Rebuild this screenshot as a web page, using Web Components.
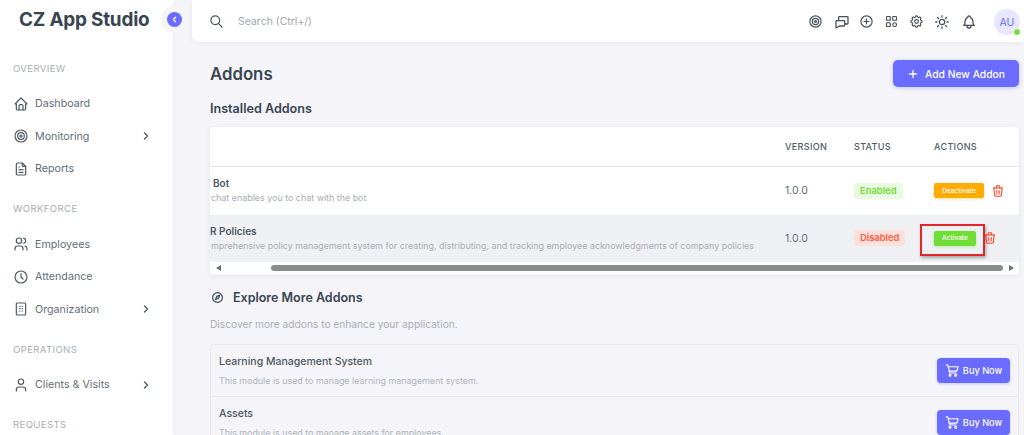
<!DOCTYPE html>
<html><head><meta charset="utf-8"><title>Addons</title>
<style>
html,body{margin:0;height:435px;overflow:hidden;background:#f4f4f9;font-family:"Inter","Liberation Sans",sans-serif;color:#646e78}
</style></head>
<body>
<app-shell>
  <side-nav slot="side">
    <nav-section label="OVERVIEW">
      <nav-item icon="home">Dashboard</nav-item>
      <nav-item icon="target" more>Monitoring</nav-item>
      <nav-item icon="file">Reports</nav-item>
    </nav-section>
    <nav-section label="WORKFORCE">
      <nav-item icon="users">Employees</nav-item>
      <nav-item icon="clock">Attendance</nav-item>
      <nav-item icon="building" more>Organization</nav-item>
    </nav-section>
    <nav-section label="OPERATIONS">
      <nav-item icon="user" more>Clients &amp; Visits</nav-item>
    </nav-section>
    <nav-section label="REQUESTS"></nav-section>
  </side-nav>
  <top-bar slot="top"></top-bar>
  <page-head title="Addons" action="Add New Addon"></page-head>
  <section-title>Installed Addons</section-title>
  <addon-table>
    <addon-row name="Bot" nx="3" desc="chat enables you to chat with the bot" status="Enabled" action="Deactivate"></addon-row>
    <addon-row name="R Policies" nx="0" desc="mprehensive policy management system for creating, distributing, and tracking employee acknowledgments of company policies" status="Disabled" action="Activate" hover></addon-row>
  </addon-table>
  <explore-head title="Explore More Addons" desc="Discover more addons to enhance your application."></explore-head>
  <market-list>
    <market-item name="Learning Management System" desc="This module is used to manage learning management system."></market-item>
    <market-item name="Assets" desc="This module is used to manage assets for employees."></market-item>
  </market-list>
</app-shell>
<script>
const P={
home:'<path d="M5 12H3l9-9 9 9h-2"/><path d="M5 12v7a2 2 0 0 0 2 2h10a2 2 0 0 0 2-2v-7"/><path d="M9 21v-6a2 2 0 0 1 2-2h2a2 2 0 0 1 2 2v6"/>',
target:'<circle cx="12" cy="12" r="1.5"/><circle cx="12" cy="12" r="5"/><circle cx="12" cy="12" r="9"/>',
file:'<path d="M14 3v4a1 1 0 0 0 1 1h4"/><path d="M17 21H7a2 2 0 0 1-2-2V5a2 2 0 0 1 2-2h7l5 5v11a2 2 0 0 1-2 2z"/><path d="M9 9h1M9 13h6M9 17h6"/>',
users:'<circle cx="9" cy="7" r="4"/><path d="M3 21v-2a4 4 0 0 1 4-4h4a4 4 0 0 1 4 4v2"/><path d="M16 3.13a4 4 0 0 1 0 7.75"/><path d="M21 21v-2a4 4 0 0 0-3-3.85"/>',
clock:'<circle cx="12" cy="12" r="9"/><path d="M12 7v5l3 3"/>',
building:'<rect x="5" y="3" width="14" height="18" rx="1.5"/><path d="M9.5 8h.01M12 8h.01M14.5 8h.01M9.5 11.5h.01M12 11.5h.01M14.5 11.5h.01M9.5 15h.01M12 15h.01M14.5 15h.01"/>',
user:'<circle cx="12" cy="7" r="4"/><path d="M5 21v-2a4 4 0 0 1 4-4h6a4 4 0 0 1 4 4v2"/>',
chevron:'<path d="M9 6l6 6-6 6"/>',
left:'<path d="M15 6l-6 6 6 6"/>',
search:'<circle cx="10" cy="10" r="7"/><path d="M21 21l-6-6"/>',
messages:'<path d="M4 10h11a1 1 0 0 1 1 1v6a1 1 0 0 1-1 1H8l-5 3V11a1 1 0 0 1 1-1z"/><path d="M7 10V5a1 1 0 0 1 1-1h12a1 1 0 0 1 1 1v9a1 1 0 0 1-1 1h-4"/>',
plusc:'<circle cx="12" cy="12" r="9"/><path d="M8 12h8M12 8v8"/>',
grid:'<rect x="4" y="4" width="6" height="6" rx="1"/><rect x="14" y="4" width="6" height="6" rx="1"/><rect x="4" y="14" width="6" height="6" rx="1"/><circle cx="17" cy="17" r="3"/>',
gear:'<path d="M10.325 4.317c.426-1.756 2.924-1.756 3.35 0a1.724 1.724 0 0 0 2.573 1.066c1.543-.94 3.31.826 2.37 2.37a1.724 1.724 0 0 0 1.065 2.572c1.756.426 1.756 2.924 0 3.35a1.724 1.724 0 0 0-1.066 2.573c.94 1.543-.826 3.31-2.37 2.37a1.724 1.724 0 0 0-2.572 1.065c-.426 1.756-2.924 1.756-3.35 0a1.724 1.724 0 0 0-2.573-1.066c-1.543.94-3.31-.826-2.37-2.37a1.724 1.724 0 0 0-1.065-2.572c-1.756-.426-1.756-2.924 0-3.35a1.724 1.724 0 0 0 1.066-2.573c-.94-1.543.826-3.31 2.37-2.37c1 .608 2.296.07 2.572-1.065z"/><circle cx="12" cy="12" r="3"/>',
sun:'<circle cx="12" cy="12" r="4"/><path d="M2.5 12h2M12 2.5v2M19.5 12h2M12 19.5v2M5.3 5.3l1.4 1.4M18.7 5.3l-1.4 1.4M17.3 17.3l1.4 1.4M6.7 17.3l-1.4 1.4"/>',
bell:'<path d="M10 5a2 2 0 1 1 4 0a7 7 0 0 1 4 6v3a4 4 0 0 0 2 3H4a4 4 0 0 0 2-3v-3a7 7 0 0 1 4-6"/><path d="M9 17v1a3 3 0 0 0 6 0v-1"/>',
trash:'<path d="M4 7h16M10 11v6M14 11v6"/><path d="M5 7l1 12a2 2 0 0 0 2 2h8a2 2 0 0 0 2-2l1-12"/><path d="M9 7V4a1 1 0 0 1 1-1h4a1 1 0 0 1 1 1v3"/>',
cart:'<circle cx="8" cy="19.5" r="1.6"/><circle cx="17" cy="19.5" r="1.6"/><path d="M2 3h2.5l3 13H18"/><path d="M5.5 6H21l-2 7H7"/>',
compass:'<circle cx="12" cy="12" r="9"/><path d="M8.5 15.5l2-5.5 5.5-2-2 5.5z"/>',
plus:'<path d="M12 5v14M5 12h14"/>'
};
function def(name,html){
  customElements.define(name,class extends HTMLElement{
    connectedCallback(){
      if(this.shadowRoot)return;
      const s=this.attachShadow({mode:'open'});
      s.innerHTML=typeof html==='function'?html(this):html;
    }
  });
}
def('ui-icon',e=>{
  const w=e.getAttribute('size')||16,sw=e.getAttribute('sw')||2;
  return `<style>:host{display:inline-flex;flex:none;width:${w}px;height:${w}px;color:inherit}svg{display:block}</style>
  <svg xmlns="http://www.w3.org/2000/svg" width="${w}" height="${w}" viewBox="0 0 24 24" fill="none" stroke="currentColor" stroke-width="${sw}" stroke-linecap="round" stroke-linejoin="round">${P[e.getAttribute('name')]}</svg>`;
});
def('app-shell',`<style>
:host{display:grid;grid-template-columns:173px 1fr;height:435px;overflow:hidden}
.main{min-width:0;display:flex;flex-direction:column;padding-left:19px}
.content{padding:18px 5px 0 18px;display:flex;flex-direction:column;overflow:hidden}
</style><slot name="side"></slot><div class="main"><slot name="top"></slot><div class="content"><slot></slot></div></div>`);
def('side-nav',`<style>
:host{display:block;background:#fff;height:435px;box-shadow:0 0 4px rgba(47,43,61,.06);position:relative;z-index:2}
.brand{height:38px;display:flex;align-items:center;padding-left:19px;font-size:18.9px;font-weight:700;color:#384551;letter-spacing:-.2px;white-space:nowrap}
.nav{padding-top:22.6px;height:374px;overflow:hidden}
.tog{position:absolute;left:161px;top:6px;width:27px;height:27px;border-radius:50%;background:#f4f4f9;display:flex;align-items:center;justify-content:center}
.tog i{width:15px;height:15px;border-radius:50%;background:#696cff;color:#fff;display:flex;align-items:center;justify-content:center}
</style><div class="brand">CZ App Studio</div><div class="tog"><i><ui-icon name="left" size="9" sw="3.4"></ui-icon></i></div><div class="nav"><slot></slot></div>`);
def('nav-section',e=>`<style>
:host{display:block;margin-bottom:16px}
.l{height:16px;line-height:16px;padding-left:13px;font-size:9.6px;letter-spacing:.35px;color:#a9aeb4;margin-bottom:11px}
</style><div class="l">${e.getAttribute('label')}</div><slot></slot>`);
def('nav-item',e=>`<style>
:host{display:flex;align-items:center;height:32.5px;padding-left:13px;font-size:10.7px;color:#646e78;gap:6px;width:139px}
.t{flex:1;white-space:nowrap}
ui-icon{color:#4f5a65}
</style><ui-icon name="${e.getAttribute('icon')}" size="16" sw="1.8"></ui-icon><span class="t"><slot></slot></span>${e.hasAttribute('more')?'<ui-icon name="chevron" size="12" sw="2.8"></ui-icon>':''}`);
def('top-bar',`<style>
:host{display:flex;align-items:center;height:42px;background:#fff;border-radius:0 0 0 6px;box-shadow:0 1px 5px rgba(47,43,61,.07);padding:0 4px 0 17px;box-sizing:border-box;color:#46515b}
.s{margin-left:14px;font-size:10.5px;color:#a3a8ae;flex:1;white-space:nowrap}
.i{display:flex;align-items:center;margin-top:1px}
.a{position:relative;width:26px;height:26px;border-radius:50%;background:#e7e7ff;color:#696cff;font-size:10.5px;display:flex;align-items:center;justify-content:center;margin-left:17px;margin-top:2px}
.a::after{content:"";position:absolute;right:-1px;bottom:-1px;width:6px;height:6px;border-radius:50%;background:#71dd37;border:1px solid #fff}
</style><ui-icon name="search" size="15" sw="1.9"></ui-icon><span class="s">Search (Ctrl+/)</span>
<div class="i"><ui-icon name="target" size="15" sw="1.9" style="margin-right:11px"></ui-icon><ui-icon name="messages" size="16" sw="1.9" style="margin-right:9px"></ui-icon><ui-icon name="plusc" size="15" sw="1.9" style="margin-right:10px"></ui-icon><ui-icon name="grid" size="15" sw="1.9" style="margin-right:10px"></ui-icon><ui-icon name="gear" size="15" sw="1.9" style="margin-right:10px"></ui-icon><ui-icon name="sun" size="16" sw="1.9" style="margin-right:11px"></ui-icon><ui-icon name="bell" size="16" sw="1.9"></ui-icon></div><div class="a">AU</div>`);
def('ui-button',e=>{const k=e.getAttribute('kind');return `<style>
:host{display:inline-flex;align-items:center;justify-content:center;box-sizing:border-box;border-radius:4px;color:#fff;white-space:nowrap}
:host([kind=add]){width:126px;height:27px;background:#696cff;font-size:10.3px;font-weight:500;gap:6px;border-radius:5px;box-shadow:0 1px 4px rgba(105,108,255,.35)}
:host([kind=buy]){width:73px;height:25px;background:#696cff;font-size:9.2px;font-weight:500;gap:3px;box-shadow:0 1px 3px rgba(105,108,255,.35)}
:host([kind=Deactivate]){width:50px;height:15px;background:#ffab00;font-size:6.6px;font-weight:500;border-radius:2px;box-shadow:0 1px 3px rgba(255,171,0,.4)}
:host([kind=Activate]){width:42px;height:15px;background:#71dd37;font-size:6.6px;font-weight:500;border-radius:2px;box-shadow:0 1px 3px rgba(113,221,55,.4)}
</style>${k=='add'?'<ui-icon name="plus" size="12" sw="2.6"></ui-icon>':k=='buy'?'<ui-icon name="cart" size="15" sw="1.8"></ui-icon>':''}<slot></slot>`});
def('page-head',e=>`<style>
:host{display:flex;justify-content:space-between;align-items:center;height:27px}
h1{margin:0;font-size:16.8px;font-weight:600;color:#384551}
</style><h1>${e.getAttribute('title')}</h1><ui-button kind="add">${e.getAttribute('action')}</ui-button>`);
def('section-title',`<style>:host{display:block;margin-top:14px;height:16px;line-height:16px;font-size:12.6px;font-weight:600;color:#384551}</style><slot></slot>`);
def('addon-table',`<style>
:host{display:block;margin-top:10px;background:#fff;border-radius:4px;box-shadow:0 1px 4px rgba(47,43,61,.08);height:148px;overflow:hidden}
.h{display:grid;grid-template-columns:575px 69px 80px 1fr;height:39px;align-items:center;border-bottom:1px solid #e6e6e9;font-size:9.1px;letter-spacing:.3px;color:#525d68;font-weight:500}
.sb{display:flex;align-items:center;height:12px;padding:0 5px 0 6px;gap:8px}
.arr{width:0;height:0;border:3.5px solid transparent;border-left:0;border-right:5px solid #6f6f6f}
.arr.r{border-right:0;border-left:5px solid #6f6f6f;margin-left:-2px}
.track{flex:1;padding-left:42px;display:flex}
.th{flex:1;height:6px;border-radius:3px;background:#8d8d8d}
</style><div class="h"><span></span><span>VERSION</span><span>STATUS</span><span>ACTIONS</span></div><slot></slot>
<div class="sb"><i class="arr"></i><div class="track"><div class="th"></div></div><i class="arr r"></i></div>`);
def('addon-row',e=>{const en=e.getAttribute('status')=='Enabled';return `<style>
:host{display:grid;grid-template-columns:575px 69px 80px 1fr;align-items:center;height:47.5px;position:relative}
:host([hover]){background:#eff0f3}
.n{white-space:nowrap;min-width:0}
.t{font-size:10px;font-weight:600;color:#4d5862;margin-left:${e.getAttribute('nx')}px;line-height:14px}
.d{font-size:8.92px;color:#a9aeb4;line-height:14px;margin-top:1px;margin-left:1px}
.v{font-size:10.5px;color:#646e78}
.bw{display:flex}
.b{font-size:9.4px;font-weight:600;padding:0 6px;height:16px;line-height:16px;border-radius:3px;background:${en?'#e8fadf':'#ffe0db'};color:${en?'#71dd37':'#ff5b3f'}}
.a{display:flex;align-items:center;gap:7px;color:#ff3e1d}
.mark{position:absolute;left:710px;top:9.5px;width:65px;height:32px;box-sizing:border-box;border:2px solid #e0262b;box-shadow:1px 2px 3px rgba(0,0,0,.3)}
</style><div class="n"><div class="t">${e.getAttribute('name')}</div><div class="d">${e.getAttribute('desc')}</div></div>
<div class="v">1.0.0</div><div class="bw"><span class="b">${e.getAttribute('status')}</span></div>
<div class="a"><ui-button kind="${e.getAttribute('action')}">${e.getAttribute('action')}</ui-button><ui-icon name="trash" size="14" sw="1.8"></ui-icon></div>${en?'':'<div class="mark"></div>'}`});
def('explore-head',e=>`<style>
:host{display:block;margin-top:14px}
.t{display:flex;align-items:center;gap:9px;height:16px;font-size:12.5px;font-weight:600;color:#384551;padding-left:1px}
.d{margin-top:12px;font-size:10.2px;color:#a9aeb4;line-height:14px}
</style><div class="t"><ui-icon name="compass" size="13" sw="2.2"></ui-icon>${e.getAttribute('title')}</div><div class="d">${e.getAttribute('desc')}</div>`);
def('market-list',`<style>:host{display:block;margin-top:13px;border:1px solid #e9e9ee;border-radius:4px}</style><slot></slot>`);
def('market-item',e=>`<style>
:host{display:flex;align-items:center;justify-content:space-between;height:52px;padding:0 8px;box-sizing:border-box;border-bottom:1px solid #e9e9ee}
.t{font-size:10.5px;font-weight:500;color:#4d5862;line-height:14px}
.d{font-size:8.9px;color:#b0b4ba;margin-top:6px;line-height:12px}
</style><div><div class="t">${e.getAttribute('name')}</div><div class="d">${e.getAttribute('desc')}</div></div><ui-button kind="buy">Buy Now</ui-button>`);
</script>
</body></html>
